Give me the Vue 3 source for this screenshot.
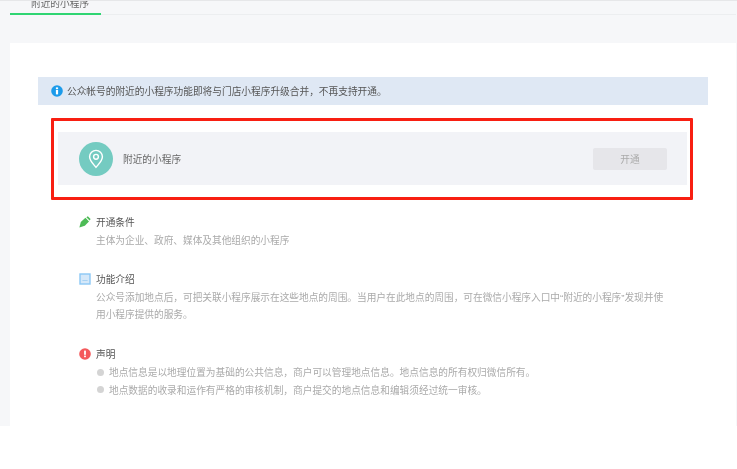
<script setup>
const notes = [
  '地点信息是以地理位置为基础的公共信息，商户可以管理地点信息。地点信息的所有权归微信所有。',
  '地点数据的收录和运作有严格的审核机制，商户提交的地点信息和编辑须经过统一审核。'
]
</script>

<template>
  <div class="page">
    <div class="backdrop">
      <header class="tabs">
        <div class="tab"><span class="tab-label">附近的小程序</span></div>
      </header>
      <main class="card">
        <div class="notice">
          <svg class="notice-icon" viewBox="0 0 12 12" width="12" height="12">
            <circle cx="6" cy="6" r="5.8" fill="#1c9bea" />
            <rect x="4.9" y="5" width="2.2" height="4.4" fill="#fff" />
            <rect x="4.9" y="2.4" width="2.2" height="1.8" fill="#fff" />
          </svg>
          <span>公众帐号的附近的小程序功能即将与门店小程序升级合并，不再支持开通。</span>
        </div>

        <div class="highlight">
          <div class="panel">
            <span class="logo">
              <svg viewBox="0 0 20 24" width="16" height="20">
                <path d="M10 22.5 C6 17.5 2 14 2 9.2 A8 8 0 0 1 18 9.2 C18 14 14 17.5 10 22.5 Z" fill="none" stroke="#fff" stroke-width="1.8" stroke-linejoin="round" />
                <circle cx="10" cy="9.2" r="3" fill="none" stroke="#fff" stroke-width="1.8" />
              </svg>
            </span>
            <span class="panel-title">附近的小程序</span>
            <button class="open-btn" type="button">开通</button>
          </div>
        </div>

        <section class="info first">
          <h3 class="info-title">
            <svg class="info-icon" viewBox="0 0 12 12" width="12" height="12">
              <path d="M0.4 11.6 L1.8 6 L6.4 1.8 L10 5.4 L5.8 9.8 Z" fill="#4dbb56" />
              <path d="M7.4 1.2 L8.8 0.2 L11.6 3 L10.6 4.4 Z" fill="#4dbb56" />
            </svg>
            开通条件
          </h3>
          <p class="info-text">主体为企业、政府、媒体及其他组织的小程序</p>
        </section>

        <section class="info second">
          <h3 class="info-title">
            <svg class="info-icon" viewBox="0 0 12 12" width="12" height="12">
              <rect x="1" y="1" width="10" height="10" fill="#d5e8f9" stroke="#8cc8f5" stroke-width="1.4" />
              <rect x="3.4" y="7" width="5.2" height="1" fill="#a9d2f2" />
            </svg>
            功能介绍
          </h3>
          <p class="info-text">公众号添加地点后，可把关联小程序展示在这些地点的周围。当用户在此地点的周围，可在微信小程序入口中“附近的小程序”发现并使用小程序提供的服务。</p>
        </section>

        <section class="info third">
          <h3 class="info-title">
            <svg class="info-icon" viewBox="0 0 12 12" width="12" height="12">
              <circle cx="6" cy="6" r="5.8" fill="#f4595c" />
              <rect x="5.1" y="2.6" width="1.8" height="4.2" fill="#fff" />
              <rect x="5.1" y="7.6" width="1.8" height="1.6" fill="#fff" />
            </svg>
            声明
          </h3>
          <ul class="notes">
            <li v-for="note in notes" :key="note" class="note">{{ note }}</li>
          </ul>
        </section>
      </main>
    </div>
  </div>
</template>

<style>
html, body { margin: 0; background: #fff; overflow: hidden; }
</style>

<style scoped>
.page {
  width: 737px;
  height: 469px;
  background: #fff;
  overflow: hidden;
  font-family: "Liberation Sans", "Noto Sans CJK SC", sans-serif;
  filter: blur(0.5px);
}
.backdrop {
  height: 426px;
  box-sizing: border-box;
  background: #f6f7f9;
  border-top: 1px solid #e6e7e9;
  padding: 0 1px 0 10px;
  display: flex;
  flex-direction: column;
}
.tabs {
  height: 14px;
  box-sizing: border-box;
  border-bottom: 1px solid #eceef0;
  flex: none;
}
.tab {
  width: 91px;
  height: 14px;
  box-sizing: border-box;
  border-bottom: 2px solid #2fd573;
  padding-left: 21px;
  overflow: hidden;
}
.tab-label {
  display: block;
  margin-top: -4px;
  font-size: 9.7px;
  line-height: 14px;
  color: #666;
}
.card {
  flex: 1;
  margin-top: 28px;
  background: #fff;
  padding: 34px 28px 0;
}
.notice {
  height: 28px;
  width: 670px;
  display: flex;
  align-items: center;
  gap: 4px;
  padding-left: 13px;
  box-sizing: border-box;
  background: #dfe8f4;
  font-size: 9.7px;
  color: #555;
}
.notice-icon { flex: none; }
.highlight {
  width: 642px;
  height: 82px;
  box-sizing: border-box;
  margin: 13px 0 0 13px;
  border: 3px solid #f81f12;
  border-radius: 1px;
  padding: 11px 3px 0 4px;
}
.panel {
  height: 53px;
  background: #f2f3f7;
  display: flex;
  align-items: center;
  padding: 0 20px 0 21px;
}
.logo {
  width: 34px;
  height: 34px;
  border-radius: 50%;
  background: #74cbc1;
  display: flex;
  align-items: center;
  justify-content: center;
  flex: none;
}
.panel-title {
  margin-left: 10px;
  font-size: 9.7px;
  color: #666;
  flex: 1;
}
.open-btn {
  width: 74px;
  height: 22px;
  padding: 0;
  border: 0;
  border-radius: 2px;
  background: #e6e6ea;
  color: #aaa;
  font: inherit;
  font-size: 9.7px;
}
.info { margin: 0 0 0 41px; width: 588px; }
.first { margin-top: 14px; }
.second { margin-top: 21px; }
.third { margin-top: 22px; }
.info-title {
  margin: 0;
  display: flex;
  align-items: center;
  gap: 5px;
  height: 16px;
  font-size: 9.7px;
  font-weight: 400;
  color: #555;
}
.info-icon { flex: none; }
.info-text {
  margin: 2px 0 0 17px;
  font-size: 9.7px;
  line-height: 17.5px;
  letter-spacing: -0.02px;
  color: #aaa;
}
.notes {
  list-style: none;
  margin: 2px 0 0 18px;
  padding: 0;
}
.note {
  display: flex;
  align-items: center;
  height: 17.5px;
  font-size: 9.7px;
  color: #aaa;
  white-space: nowrap;
}
.note::before {
  content: "";
  width: 7px;
  height: 7px;
  border-radius: 50%;
  background: #d4d4d4;
  margin-right: 5px;
  flex: none;
}
</style>
